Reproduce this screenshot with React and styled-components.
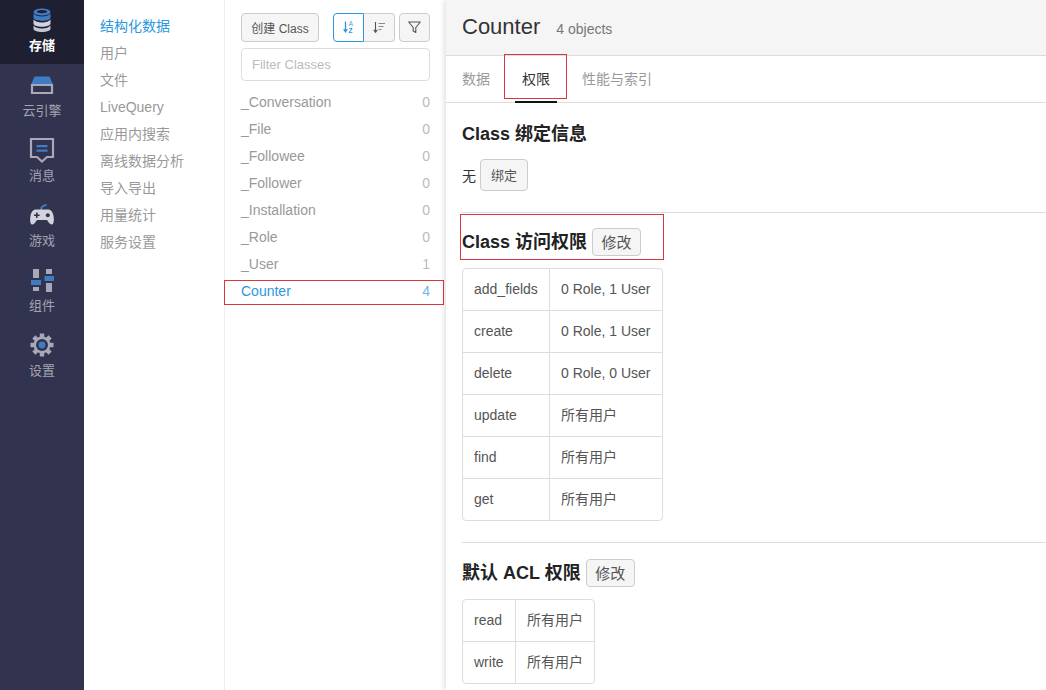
import React from 'react';
import styled, { createGlobalStyle } from 'styled-components';

const FONT = '"Liberation Sans", "Noto Sans CJK SC", sans-serif';

const GlobalStyle = createGlobalStyle`
  html, body { margin: 0; padding: 0; background: #fff; }
  body { font-family: ${FONT}; font-size: 14px; color: #333; }
  * { box-sizing: border-box; }
`;

const Page = styled.div`
  display: flex;
  width: 1046px;
  height: 690px;
  overflow: hidden;
`;

// left dark bar
const Rail = styled.nav`
  width: 84px;
  flex: none;
  background: #32334f;
`;
const RailItem = styled.div`
  height: 65px;
  margin-top: ${p => (p.$active ? '-1px' : '0')};
  display: flex;
  flex-direction: column;
  align-items: center;
  padding-top: 8px;
  background: ${p => (p.$active ? '#1e1f30' : 'transparent')};
  color: ${p => (p.$active ? '#fff' : '#a3a3b3')};
  font-size: 13px;
  font-weight: ${p => (p.$active ? 700 : 400)};
  line-height: 20px;
`;
const RailIcon = styled.svg`
  width: 26px;
  height: 26px;
  margin-bottom: 3px;
  flex: none;
`;

// second column
const SubNav = styled.div`
  width: 141px;
  flex: none;
  padding: 13px 0 0 16px;
  border-right: 1px solid #eee;
`;
const SubItem = styled.div`
  height: 27px;
  line-height: 27px;
  font-size: 14px;
  color: ${p => (p.$active ? '#2c97de' : '#999')};
`;

// class list column
const ClassPanel = styled.div`
  width: 221px;
  flex: none;
  padding: 13px 16px 0 16px;
`;
const Toolbar = styled.div`
  display: flex;
  align-items: center;
  height: 29px;
`;
const Btn = styled.button`
  font-family: ${FONT};
  font-size: ${p => p.$size || 15}px;
  font-weight: 400;
  height: ${p => p.$h || 29}px;
  padding: 0 0 1px;
  width: ${p => p.$w}px;
  margin-left: ${p => p.$ml || 0}px;
  color: #555;
  background: #f5f5f5;
  border: 1px solid #ccc;
  border-radius: 4px;
  display: inline-flex;
  align-items: center;
  justify-content: center;
  flex: none;
`;
const SortGroup = styled.div`
  display: flex;
  margin-left: 14px;
`;
const SortBtn = styled(Btn)`
  width: 31px;
  background: ${p => (p.$on ? '#fff' : '#f5f5f5')};
  border-color: ${p => (p.$on ? '#2c97de' : '#ccc')};
  border-radius: ${p => (p.$on ? '4px 0 0 4px' : '0 4px 4px 0')};
  border-left-width: ${p => (p.$on ? '1px' : '0')};
`;
const FilterInput = styled.input`
  display: block;
  width: 189px;
  height: 33px;
  margin: 6px 0 8px;
  padding: 0 10px;
  font-family: ${FONT};
  font-size: 13px;
  border: 1px solid #ddd;
  border-radius: 4px;
  outline: none;
  &::placeholder { color: #bbb; opacity: 1; }
`;
const ClassRow = styled.div`
  position: relative;
  display: flex;
  justify-content: space-between;
  height: 27px;
  line-height: 27px;
  font-size: 14px;
  color: ${p => (p.$active ? '#2c97de' : '#999')};
`;
const ClassCount = styled.span`
  color: ${p => (p.$active ? '#6fb6e8' : '#bbb')};
`;

// main
const Main = styled.main`
  flex: 1;
  min-width: 0;
  background: #fff;
  box-shadow: -2px 0 5px rgba(0, 0, 0, 0.12);
  position: relative;
`;
const Header = styled.header`
  height: 56px;
  padding: 0 16px;
  display: flex;
  align-items: baseline;
  background: #f5f5f5;
  border-bottom: 1px solid #ddd;
  line-height: 53px;
`;
const Title = styled.span`
  font-size: 22px;
  color: #333;
`;
const Objects = styled.span`
  font-size: 14px;
  color: #777;
  margin-left: 16px;
`;
const Tabs = styled.div`
  display: flex;
  height: 47px;
  padding-left: 16px;
  border-bottom: 1px solid #ddd;
`;
const Tab = styled.div`
  position: relative;
  height: 47px;
  margin-right: ${p => p.$mr}px;
  padding: 0 ${p => p.$pad || 0}px;
  line-height: 46px;
  font-size: 14px;
  color: ${p => (p.$active ? '#333' : '#999')};
  border-bottom: ${p => (p.$active ? '2px solid #111' : 'none')};
`;
const Section = styled.section`
  position: relative;
  padding: ${p => p.$top}px 16px 0;
`;
const SectionTitle = styled.div`
  display: flex;
  align-items: center;
  gap: 5px;
  font-size: 18px;
  font-weight: 700;
  color: #222;
  height: 28px;
  white-space: pre;
`;
const TitleText = styled.span`
  padding-bottom: 4px;
`;
const BindRow = styled.div`
  display: flex;
  align-items: center;
  gap: 4px;
  margin-top: 11px;
  height: 32px;
  font-size: 14px;
  color: #333;
`;
const Divider = styled.hr`
  border: none;
  border-top: 1px solid #ddd;
  margin: ${p => p.$top}px 0 0 16px;
`;
const Table = styled.table`
  border-collapse: separate;
  border-spacing: 0;
  margin-top: 12px;
  border: 1px solid #ddd;
  border-radius: 4px;
  font-size: 14px;
  color: #555;
`;
const Cell = styled.td`
  height: ${p => (p.$first ? 41 : 42)}px;
  padding: 0 11px 1px;
  line-height: 20px;
  white-space: nowrap;
  border-left: ${p => (p.$second ? '1px solid #ddd' : 'none')};
  border-top: ${p => (p.$first ? 'none' : '1px solid #ddd')};
  width: ${p => p.$w}px;
`;
const RedBox = styled.div`
  position: absolute;
  left: ${p => p.$l}px;
  top: ${p => p.$t}px;
  width: ${p => p.$w}px;
  height: ${p => p.$h}px;
  border: 1px solid #d9363e;
  pointer-events: none;
`;

const GREY = '#a8a8b8';
const BLUE = '#3f7cc4';

const DbIcon = () => (
  <RailIcon viewBox="0 0 26 26">
    <ellipse cx="13" cy="5" rx="8.5" ry="3.6" fill={BLUE} />
    <ellipse cx="13" cy="4.6" rx="5" ry="1.6" fill="#1e1f30" />
    <path d="M4.5 6.5v4c0 2 3.8 3.4 8.5 3.4s8.5-1.4 8.5-3.4v-4c-1.4 2-4.8 3-8.5 3s-7.1-1-8.5-3z" fill={BLUE} />
    <path d="M4.5 12.6v4c0 2 3.8 3.2 8.5 3.2s8.5-1.2 8.5-3.2v-4c-1.4 2-4.8 3-8.5 3s-7.1-1-8.5-3z" fill="#d3d3de" />
    <path d="M4.5 18.4v3.4c0 2 3.8 3.2 8.5 3.2s8.5-1.2 8.5-3.2v-3.4c-1.4 2-4.8 3-8.5 3s-7.1-1-8.5-3z" fill="#c4c4d2" />
  </RailIcon>
);
const EngineIcon = () => (
  <RailIcon viewBox="0 0 26 26">
    <path d="M5.5 4.500h15l3.500 8H2z" fill={BLUE} />
    <path d="M3 13h20v8H3z" fill="none" stroke={GREY} strokeWidth="2.2" />
  </RailIcon>
);
const MessageIcon = () => (
  <RailIcon viewBox="0 0 26 26">
    <path d="M2 2h22v18h-6l-5 4.5L8 20H2z" fill="none" stroke={GREY} strokeWidth="2.2" />
    <path d="M7.5 8h11v2.2h-11zM7.5 12.5h11v2.2h-11z" fill={BLUE} />
  </RailIcon>
);
const GameIcon = () => (
  <RailIcon viewBox="0 0 26 26">
    <path d="M12 8c0-3 1.500-4.500 5.500-5" fill="none" stroke={BLUE} strokeWidth="2" />
    <path d="M7 7.500h12c3 0 4.800 2.500 5.500 6.500.7 4 .4 8-1.500 8.500-2 .5-3.500-2.500-5-4.500H8c-1.500 2-3 5-5 4.500-1.900-.5-2.200-4.500-1.500-8.500C2.200 10 4 7.500 7 7.500z" fill="#d3d3de" />
    <path d="M7 10.500h1.600v2h2v1.600h-2v2H7v-2H5v-1.600h2z" fill="#32334f" />
    <circle cx="18.800" cy="13.200" r="2" fill="#32334f" />
  </RailIcon>
);
const WidgetIcon = () => (
  <RailIcon viewBox="0 0 26 26">
    <path d="M4 2h6v9H4zM17 2h6v5h-6zM4 20h6v4H4zM17 16h6v9h-6z" fill={GREY} />
    <path d="M2 13h10v5H2zM15.500 9H25v5h-9.500z" fill={BLUE} />
  </RailIcon>
);
const GearIcon = () => (
  <RailIcon viewBox="0 0 26 26">
    <g fill={GREY}>
      {[0, 45, 90, 135, 180, 225, 270, 315].map(a => (
        <rect key={a} x="10.800" y="1.500" width="4.400" height="6" transform={`rotate(${a} 13 13)`} />
      ))}
    </g>
    <circle cx="13" cy="13" r="8.500" fill={GREY} />
    <circle cx="13" cy="13" r="6" fill="#32334f" />
    <circle cx="13" cy="13" r="3.400" fill={BLUE} />
  </RailIcon>
);

const SortAzIcon = () => (
  <svg width="12" height="12" viewBox="0 0 12 12">
    <path d="M2.500 0.500v10M0.700 8.200L2.500 10.800 4.300 8.200" fill="none" stroke="#2c97de" strokeWidth="1.300" />
    <text x="5.400" y="5.300" fontSize="6.500" fontWeight="700" fill="#7dbcea" fontFamily="Liberation Sans">A</text>
    <text x="5.600" y="11.600" fontSize="6.500" fontWeight="700" fill="#2c97de" fontFamily="Liberation Sans">Z</text>
  </svg>
);
const SortLinesIcon = () => (
  <svg width="12" height="11" viewBox="0 0 12 11">
    <path d="M2.500 0v10M0.700 7.800L2.500 10.400 4.300 7.800" fill="none" stroke="#555" strokeWidth="1.100" />
    <path d="M5.500 1.500H12M5.500 4.500h5M5.500 7.500h3" stroke="#888" strokeWidth="1" />
  </svg>
);
const FunnelIcon = () => (
  <svg width="13" height="13" viewBox="0 0 13 13">
    <path d="M0.700 1h11.600L7.800 6.500v5L5.200 10V6.500z" fill="none" stroke="#555" strokeWidth="1.100" strokeLinejoin="round" />
  </svg>
);

const railItems = [
  { label: '存储', Icon: DbIcon, active: true },
  { label: '云引擎', Icon: EngineIcon },
  { label: '消息', Icon: MessageIcon },
  { label: '游戏', Icon: GameIcon },
  { label: '组件', Icon: WidgetIcon },
  { label: '设置', Icon: GearIcon },
];
const subItems = ['结构化数据', '用户', '文件', 'LiveQuery', '应用内搜索', '离线数据分析', '导入导出', '用量统计', '服务设置'];
const classes = [
  ['_Conversation', 0],
  ['_File', 0],
  ['_Followee', 0],
  ['_Follower', 0],
  ['_Installation', 0],
  ['_Role', 0],
  ['_User', 1],
];
const classPerms = [
  ['add_fields', '0 Role, 1 User'],
  ['create', '0 Role, 1 User'],
  ['delete', '0 Role, 0 User'],
  ['update', '所有用户'],
  ['find', '所有用户'],
  ['get', '所有用户'],
];
const aclPerms = [
  ['read', '所有用户'],
  ['write', '所有用户'],
];

const PermTable = ({ rows, firstWidth, secondWidth }) => (
  <Table>
    <tbody>
      {rows.map(([k, v], i) => (
        <tr key={k}>
          <Cell $first={i === 0} $w={firstWidth}>{k}</Cell>
          <Cell $first={i === 0} $second $w={secondWidth}>{v}</Cell>
        </tr>
      ))}
    </tbody>
  </Table>
);

export default function App() {
  return (
    <Page>
      <GlobalStyle />
      <Rail>
        {railItems.map(({ label, Icon, active }) => (
          <RailItem key={label} $active={active}>
            <Icon />
            {label}
          </RailItem>
        ))}
      </Rail>
      <SubNav>
        {subItems.map((s, i) => (
          <SubItem key={s} $active={i === 0}>{s}</SubItem>
        ))}
      </SubNav>
      <ClassPanel>
        <Toolbar>
          <Btn $w={78} $size={12}>创建 Class</Btn>
          <SortGroup>
            <SortBtn $on><SortAzIcon /></SortBtn>
            <SortBtn><SortLinesIcon /></SortBtn>
          </SortGroup>
          <Btn $w={31} $ml={4}><FunnelIcon /></Btn>
        </Toolbar>
        <FilterInput placeholder="Filter Classes" readOnly />
        {classes.map(([name, n]) => (
          <ClassRow key={name}>
            <span>{name}</span>
            <ClassCount>{n}</ClassCount>
          </ClassRow>
        ))}
        <ClassRow $active>
          <span>Counter</span>
          <ClassCount $active>4</ClassCount>
          <RedBox $l={-17} $t={2} $w={220} $h={25} />
        </ClassRow>
      </ClassPanel>
      <Main>
        <Header>
          <Title>Counter</Title>
          <Objects>4 objects</Objects>
        </Header>
        <Tabs>
          <Tab $mr={25}>数据</Tab>
          <Tab $active $pad={7} $mr={25}>
            权限
            <RedBox $l={-11} $t={-2} $w={63} $h={45} />
          </Tab>
          <Tab $mr={0}>性能与索引</Tab>
        </Tabs>
        <Section $top={17}>
          <SectionTitle><TitleText>Class 绑定信息</TitleText></SectionTitle>
          <BindRow>
            无
            <Btn $w={48} $h={32} $size={13}>绑定</Btn>
          </BindRow>
        </Section>
        <Divider $top={21} />
        <Section $top={15}>
          <SectionTitle>
            <TitleText>Class 访问权限</TitleText>
            <Btn $w={49} $h={28}>修改</Btn>
          </SectionTitle>
          <PermTable rows={classPerms} firstWidth={86} secondWidth={113} />
          <RedBox $l={14} $t={1} $w={204} $h={46} />
        </Section>
        <Divider $top={21} />
        <Section $top={16}>
          <SectionTitle>
            <TitleText>默认 ACL 权限</TitleText>
            <Btn $w={49} $h={28}>修改</Btn>
          </SectionTitle>
          <PermTable rows={aclPerms} firstWidth={52} secondWidth={79} />
        </Section>
      </Main>
    </Page>
  );
}
